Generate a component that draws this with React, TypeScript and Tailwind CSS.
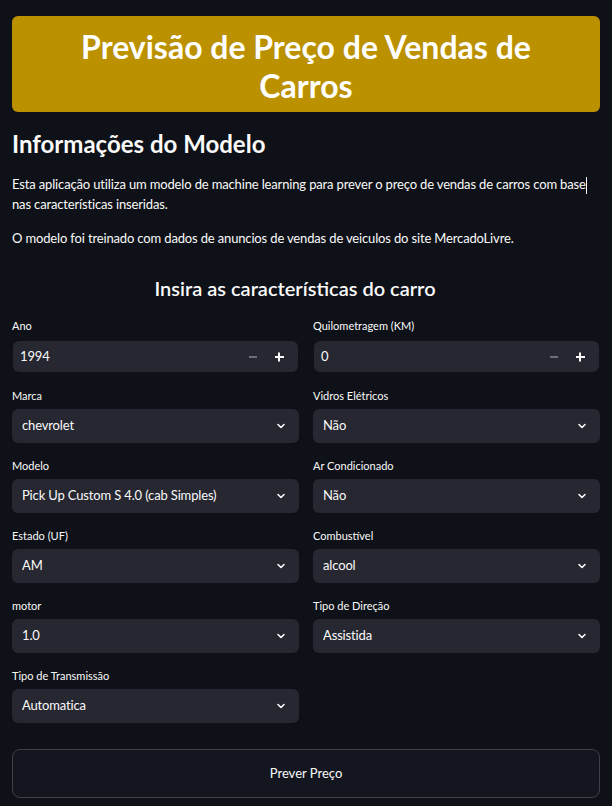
import React from "react";

const font = { fontFamily: "Lato, 'Noto Sans', sans-serif" };

function Chevron() {
  return (
    <svg width="12" height="12" viewBox="0 0 24 24" fill="none" stroke="#fafafa" strokeWidth="3.2" strokeLinecap="round" strokeLinejoin="round">
      <path d="M6 9l6 6 6-6" />
    </svg>
  );
}

function NumberField({ label, value }: { label: string; value: string }) {
  return (
    <div className="flex flex-col h-[70px]">
      <div className="h-4 text-[11px] leading-4 text-[#fafafa]">{label}</div>
      <div className="mt-[7px] h-[31px] mx-px rounded-md bg-[#262730] flex items-center pl-[7px] pr-[6px]">
        <span className="flex-1 text-[13px] tracking-[-0.15px] text-[#fafafa]">{value}</span>
        <span className="w-[26px] flex justify-center">
          <span className="block w-[8px] h-[2px] bg-[#6b6d77]" />
        </span>
        <span className="w-[26px] flex justify-center relative">
          <span className="block w-[9px] h-[2px] bg-[#fafafa]" />
          <span className="absolute left-1/2 top-1/2 -translate-x-1/2 -translate-y-1/2 block w-[2px] h-[9px] bg-[#fafafa]" />
        </span>
      </div>
    </div>
  );
}

function SelectField({ label, value }: { label: string; value: string }) {
  return (
    <div className="flex flex-col h-[70px]">
      <div className="h-4 text-[11px] leading-4 text-[#fafafa]">{label}</div>
      <div className="mt-[5px] h-[34px] rounded-md bg-[#262730] flex items-center pl-[10px] pr-[12px]">
        <span className="flex-1 text-[13px] tracking-[-0.15px] text-[#fafafa] truncate">{value}</span>
        <Chevron />
      </div>
    </div>
  );
}

export default function App() {
  return (
    <div className="min-h-[806px] bg-[#0e1117] text-[#fafafa] px-3 pt-4" style={font}>
      <div className="h-[96px] rounded-md bg-[#bb9100] flex items-center justify-center px-10 pt-[3px]">
        <h1 className="text-center text-white font-bold text-[32px] leading-[39px]">
          Previsão de Preço de Vendas de Carros
        </h1>
      </div>
      <h2 className="mt-[17px] text-[24px] leading-[30px] font-bold">Informações do Modelo</h2>
      <p className="mt-[15px] text-[13px] tracking-[-0.15px] leading-[20px]">
        Esta aplicação utiliza um modelo de machine learning para prever o preço de vendas de carros com base
        <span className="inline-block w-px h-[17px] bg-[#fafafa] align-middle" /> nas características inseridas.
      </p>
      <p className="mt-[14px] text-[13px] tracking-[-0.15px] leading-[20px]">
        O modelo foi treinado com dados de anuncios de vendas de veiculos do site MercadoLivre.
      </p>
      <h3 className="mt-[26px] text-center text-[20px] leading-[28px] font-semibold pr-[22px]">
        Insira as características do carro
      </h3>
      <div className="mt-[16px] grid grid-cols-2 gap-x-[14px]">
        <NumberField label="Ano" value="1994" />
        <NumberField label="Quilometragem (KM)" value="0" />
        <SelectField label="Marca" value="chevrolet" />
        <SelectField label="Vidros Elétricos" value="Não" />
        <SelectField label="Modelo" value="Pick Up Custom S 4.0 (cab Simples)" />
        <SelectField label="Ar Condicionado" value="Não" />
        <SelectField label="Estado (UF)" value="AM" />
        <SelectField label="Combustível" value="alcool" />
        <SelectField label="motor" value="1.0" />
        <SelectField label="Tipo de Direção" value="Assistida" />
        <SelectField label="Tipo de Transmissão" value="Automatica" />
      </div>
      <button className="mt-[11px] w-full h-[49px] rounded-lg border border-[#3d4048] bg-[#13161e] text-[13px] text-[#fafafa]">
        Prever Preço
      </button>
    </div>
  );
}
